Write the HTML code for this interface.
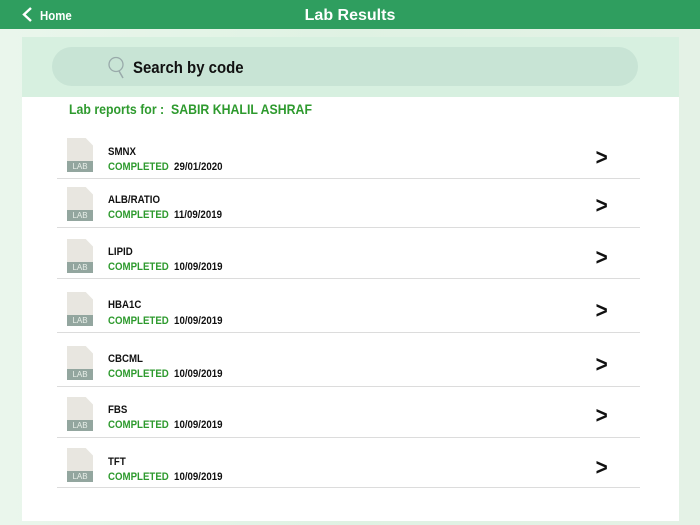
<!DOCTYPE html><html><head><style>
body{margin:0;width:700px;height:525px;overflow:hidden;position:relative;background:linear-gradient(90deg,#eaf6ec,#dff2e3 50%,#e4f2e6);font-family:"Liberation Sans",sans-serif}
.hdr{position:absolute;left:0;top:0;width:700px;height:29px;background:#2f9e5f;color:#fff;font-weight:bold}
.a{position:absolute}
.sx{transform:scaleX(.88);transform-origin:left center;white-space:nowrap}
.row .t{position:absolute;left:108px;font-size:11px;font-weight:bold;color:#111}
.st{position:absolute;left:108px;font-size:11px;font-weight:bold;color:#2e9a2e}
.st b{color:#111;margin-left:6px}
.ln{position:absolute;left:57px;width:583px;height:1px;background:#dcdcdc}
.ic{position:absolute;left:67px;width:26px;height:34px;background:#e8e6e0;clip-path:polygon(0 0,72% 0,100% 22%,100% 100%,0 100%)}
.ic i{position:absolute;left:0;bottom:0;width:26px;height:11px;background:#93a69f;color:#e8efe9;font-style:normal;font-size:8px;text-align:center;line-height:11px}
.ar{position:absolute;left:595px;font-size:23px;font-weight:bold;color:#111;line-height:22px;transform:scaleX(.9)}
</style></head><body>
<div class="hdr"><svg class="a" style="left:22px;top:7px" width="12" height="15"><path d="M9 1L2 7.5L9 14" stroke="#fff" stroke-width="2.4" fill="none"/></svg><span class="a sx" style="left:40px;top:8px;font-size:13px">Home</span><span class="a" style="left:0;width:700px;text-align:center;top:7px;font-size:16px">Lab Results</span></div>
<div class="a" style="left:22px;top:37px;width:657px;height:60px;background:#d7f0e0"></div>
<div class="a" style="left:52px;top:47px;width:586px;height:39px;border-radius:20px;background:#c8e4d5"></div>
<svg class="a" style="left:107px;top:56px" width="20" height="24"><circle cx="9" cy="8.5" r="7" stroke="#9aa" stroke-width="1.3" fill="none"/><path d="M12 15L16 22" stroke="#9aa" stroke-width="1.5"/></svg>
<div class="a sx" style="left:133px;top:58px;font-size:17px;font-weight:bold;color:#111">Search by code</div>
<div class="a" style="left:22px;top:97px;width:657px;height:424px;background:#fff"></div>
<div class="a sx" style="left:69px;top:101px;font-size:14px;font-weight:bold;color:#2e9a2e">Lab reports for :&nbsp; SABIR KHALIL ASHRAF</div>
<div class="row">
<div class="ic" style="top:138px"><i>LAB</i></div><div class="t sx" style="top:146px">SMNX</div><div class="st sx" style="top:161px">COMPLETED<b>29/01/2020</b></div><div class="ar" style="top:146px">&gt;</div><div class="ln" style="top:178px"></div>
<div class="ic" style="top:187px"><i>LAB</i></div><div class="t sx" style="top:194px">ALB/RATIO</div><div class="st sx" style="top:209px">COMPLETED<b>11/09/2019</b></div><div class="ar" style="top:194px">&gt;</div><div class="ln" style="top:227px"></div>
<div class="ic" style="top:239px"><i>LAB</i></div><div class="t sx" style="top:246px">LIPID</div><div class="st sx" style="top:261px">COMPLETED<b>10/09/2019</b></div><div class="ar" style="top:246px">&gt;</div><div class="ln" style="top:278px"></div>
<div class="ic" style="top:292px"><i>LAB</i></div><div class="t sx" style="top:299px">HBA1C</div><div class="st sx" style="top:315px">COMPLETED<b>10/09/2019</b></div><div class="ar" style="top:299px">&gt;</div><div class="ln" style="top:332px"></div>
<div class="ic" style="top:346px"><i>LAB</i></div><div class="t sx" style="top:353px">CBCML</div><div class="st sx" style="top:368px">COMPLETED<b>10/09/2019</b></div><div class="ar" style="top:353px">&gt;</div><div class="ln" style="top:386px"></div>
<div class="ic" style="top:397px"><i>LAB</i></div><div class="t sx" style="top:404px">FBS</div><div class="st sx" style="top:419px">COMPLETED<b>10/09/2019</b></div><div class="ar" style="top:404px">&gt;</div><div class="ln" style="top:437px"></div>
<div class="ic" style="top:448px"><i>LAB</i></div><div class="t sx" style="top:456px">TFT</div><div class="st sx" style="top:471px">COMPLETED<b>10/09/2019</b></div><div class="ar" style="top:456px">&gt;</div><div class="ln" style="top:487px"></div>
</div>
</body></html>
